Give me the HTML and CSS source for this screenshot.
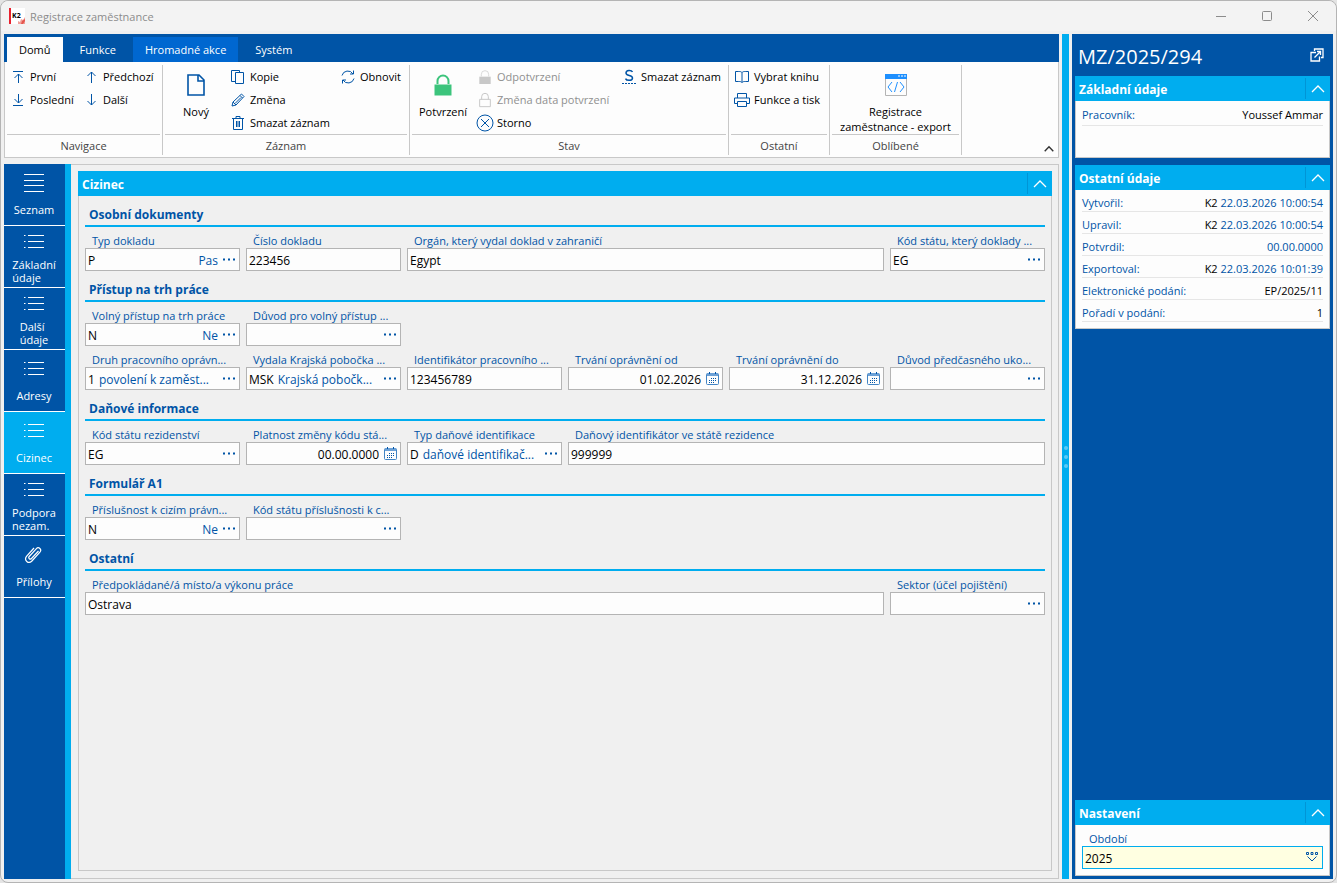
FILE: index.html
```html
<!DOCTYPE html>
<html lang="cs">
<head>
  <meta charset="UTF-8">
  <meta name="viewport" content="width=device-width, initial-scale=1.0">
  <title>Registrace zaměstnance</title>
  <link rel="stylesheet" href="styles.css">
</head>
<body>

  <!-- icon set -->
  <svg class="sprite" aria-hidden="true">
    <symbol id="i-first" viewBox="0 0 16 16"><path d="M3 2.500h10M8.500 14V5M4.500 9l4-4 4 4"/></symbol>
    <symbol id="i-last" viewBox="0 0 16 16"><path d="M3 13.500h10M8.500 2v9M4.500 7l4 4 4-4"/></symbol>
    <symbol id="i-up" viewBox="0 0 16 16"><path d="M8.500 14V3M4.500 7l4-4 4 4"/></symbol>
    <symbol id="i-down" viewBox="0 0 16 16"><path d="M8.500 2v11M4.500 9l4 4 4-4"/></symbol>
    <symbol id="i-new" viewBox="0 0 24 24"><path stroke-width="1.6" d="M4 2h11l5 5v15H4zM14 2v6h6"/></symbol>
    <symbol id="i-copy" viewBox="0 0 16 16"><path d="M5 12.500H1.500v-11h8v2M5.500 3.500h8v11h-8z"/></symbol>
    <symbol id="i-edit" viewBox="0 0 16 16"><path d="M2 14l1-4 8.500-8 2.500 2.500-8 8.500zM10 3.500l2.500 2.500M3 10l3 3M5 11.500l6-6"/></symbol>
    <symbol id="i-trash" viewBox="0 0 16 16"><path d="M2 3.500h12M6 3V1.500h4V3M3.500 3.500v11h9v-11M6.500 6v6M8 6v6M9.500 6v6"/></symbol>
    <symbol id="i-refresh" viewBox="0 0 16 16"><path d="M2 6.500A6 6 0 0 1 13 5M13.500 1.500V5H10M14 9.500A6 6 0 0 1 3 11M2.500 14.500V11H6"/></symbol>
    <symbol id="i-lock" viewBox="0 0 24 24"><path d="M6.500 11V8a5.500 5.500 0 0 1 11 0v3"/><path stroke="none" fill="currentColor" d="M3.500 11.500h17v11h-17z"/></symbol>
    <symbol id="i-lock-open" viewBox="0 0 24 24"><path stroke-width="1.500" d="M7 11V7a5 5 0 0 1 10 0v4M4 11h16v11H4z"/></symbol>
    <symbol id="i-cancel" viewBox="0 0 18 18"><circle cx="9" cy="9" r="8"/><path d="M5 5l8 8M13 5l-8 8"/></symbol>
    <symbol id="i-draft" viewBox="0 0 16 16"><path stroke-width="1.500" d="M11.500 3C10.500 1 5 .8 5 4c0 3.300 6.500 1.700 6.500 5 0 3.200-6 2.900-7 .6"/><path stroke-dasharray="2 1" d="M1 14.500h14"/></symbol>
    <symbol id="i-book" viewBox="0 0 16 16"><path d="M8 3.500C7 2.300 6 2.500 1.500 2.500v10C6 12.500 7 12.300 8 13.500c1-1.200 2-1 6.500-1v-10c-4.500 0-5.500-.2-6.500 1zv10"/></symbol>
    <symbol id="i-print" viewBox="0 0 18 16"><path d="M4.500 6V1.500h9V6M4.500 11.500h-3V6h15v5.500h-3M4.500 9.500h9v5h-9z"/></symbol>
    <symbol id="i-code" viewBox="0 0 22 22"><path stroke="#b4b4b4" fill="#fdfdfd" d="M.5 1v20.500h21V1"/><path fill="#1e90ff" stroke="none" d="M0 0h22v5H0z"/><path stroke="#fff" stroke-dasharray="2 1" d="M13 2h8"/><path stroke="#1e90ff" d="M7 8l-4 5 4 5M15 8l4 5-4 5M12.500 8l-3 10"/></symbol>
    <symbol id="i-lines" viewBox="0 0 20 18"><path d="M0 .5h20M0 6.500h20M0 11.500h20M0 17.500h20"/></symbol>
    <symbol id="i-list" viewBox="0 0 20 14"><path d="M4 .5h16M4 6.500h16M4 12.500h16M0 .5h1.500M0 6.500h1.500M0 12.500h1.500"/></symbol>
    <symbol id="i-clip" viewBox="0 0 20 20"><path stroke-width="1.200" d="M14.500 6l-7 7.500c-1.500 1.600-3.600-.4-2.300-2l7-7.700c2.500-2.600 6 .6 3.700 3.300l-8 8.900c-3.500 3.600-8.400-.8-5.200-4.800L10 3"/></symbol>
    <symbol id="i-chev" viewBox="0 0 14 8"><path d="M1 7l6-6 6 6"/></symbol>
    <symbol id="i-dots" viewBox="0 0 13 3"><path stroke="none" fill="currentColor" d="M0 .5h2v2H0zM5 .5h2v2H5zM10 .5h2v2h-2z"/></symbol>
    <symbol id="i-cal" viewBox="0 0 13 13"><rect x=".5" y="1.500" width="12" height="11" rx="1" stroke="#4284c4"/><path stroke="none" fill="#6ba0d6" d="M1 1h11v3H1z"/><path d="M3.500 0v2M9.500 0v2"/><path stroke-dasharray="1 1" d="M5 6.500h5M3 8.500h7M3 10.500h5"/></symbol>
    <symbol id="i-drop" viewBox="0 0 12 10"><path d="M.5.5h2v2h-2zM5 .5h2v2H5zM9.500.5h2v2h-2zM1.500 4.500L6 9l4.500-4.500"/></symbol>
    <symbol id="i-popout" viewBox="0 0 14 14"><path stroke-width="1.300" d="M4.500 3V1h8.500v8.500h-2M6 4.500H1V13h8.500V8.500M4.500 9.500l6-6M7 3.500h3.500V7"/></symbol>
  </svg>

  <div class="window">
    <header class="titlebar">
      <svg class="app-logo" viewBox="0 0 16 16"><path fill="#fff" d="M0 0h16v16H0z"/><path fill="#e8212e" d="M0 0h2v16H0z"/><path fill="#f3a09a" d="M9 16v-3l2 1 1-3 2 1 2-3v7z"/><path fill="#e4574f" d="M12 16l1-3 3-2v2l-2 3z"/><text x="3" y="10" class="logo-text">K2</text></svg>
      <span class="caption">Registrace zaměstnance</span>
      <div class="window-buttons">
        <button aria-label="Minimalizovat"><svg viewBox="0 0 12 12"><path d="M1 6.500h10"/></svg></button>
        <button aria-label="Maximalizovat"><svg viewBox="0 0 12 12"><rect x="1.500" y="1.500" width="9" height="9" rx="1"/></svg></button>
        <button aria-label="Zavřít"><svg viewBox="0 0 12 12"><path d="M1 1l10 10M11 1L1 11"/></svg></button>
      </div>
    </header>

    <div class="workspace">
      <div class="main">
        <nav class="tabs">
          <button class="tab active">Domů</button>
          <button class="tab">Funkce</button>
          <button class="tab hover">Hromadné akce</button>
          <button class="tab">Systém</button>
        </nav>

        <div class="ribbon">
          <section class="group nav-group">
            <div class="group-body">
              <div class="col">
                <button class="cmd"><svg><use href="#i-first"/></svg>První</button>
                <button class="cmd"><svg><use href="#i-last"/></svg>Poslední</button>
              </div>
              <div class="col">
                <button class="cmd"><svg><use href="#i-up"/></svg>Předchozí</button>
                <button class="cmd"><svg><use href="#i-down"/></svg>Další</button>
              </div>
            </div>
            <h2>Navigace</h2>
          </section>

          <section class="group record-group">
            <div class="group-body">
              <button class="big"><svg><use href="#i-new"/></svg>Nový</button>
              <div class="col">
                <button class="cmd"><svg><use href="#i-copy"/></svg>Kopie</button>
                <button class="cmd"><svg><use href="#i-edit"/></svg>Změna</button>
                <button class="cmd"><svg><use href="#i-trash"/></svg>Smazat záznam</button>
              </div>
              <div class="col">
                <button class="cmd"><svg><use href="#i-refresh"/></svg>Obnovit</button>
              </div>
            </div>
            <h2>Záznam</h2>
          </section>

          <section class="group state-group">
            <div class="group-body">
              <button class="big confirm"><svg><use href="#i-lock"/></svg>Potvrzení</button>
              <div class="col">
                <button class="cmd" disabled><svg><use href="#i-lock"/></svg>Odpotvrzení</button>
                <button class="cmd" disabled><svg><use href="#i-lock-open"/></svg>Změna data potvrzení</button>
                <button class="cmd"><svg class="wide"><use href="#i-cancel"/></svg>Storno</button>
              </div>
              <div class="col">
                <button class="cmd"><svg><use href="#i-draft"/></svg>Smazat záznam</button>
              </div>
            </div>
            <h2>Stav</h2>
          </section>

          <section class="group other-group">
            <div class="group-body">
              <div class="col">
                <button class="cmd"><svg><use href="#i-book"/></svg>Vybrat knihu</button>
                <button class="cmd"><svg class="wide"><use href="#i-print"/></svg>Funkce a tisk</button>
              </div>
            </div>
            <h2>Ostatní</h2>
          </section>

          <section class="group fav-group">
            <div class="group-body">
              <button class="big"><svg><use href="#i-code"/></svg>Registrace<br>zaměstnance - export</button>
            </div>
            <h2>Oblíbené</h2>
          </section>

          <button class="ribbon-collapse" aria-label="Sbalit pás karet"><svg><use href="#i-chev"/></svg></button>
        </div>

        <div class="content">
          <nav class="side">
            <button><svg class="lines"><use href="#i-lines"/></svg><span>Seznam</span></button>
            <button class="two-line"><svg><use href="#i-list"/></svg><span>Základní<br>údaje</span></button>
            <button class="two-line"><svg><use href="#i-list"/></svg><span>Další<br>údaje</span></button>
            <button><svg><use href="#i-list"/></svg><span>Adresy</span></button>
            <button class="active"><svg><use href="#i-list"/></svg><span>Cizinec</span></button>
            <button class="two-line"><svg><use href="#i-list"/></svg><span>Podpora<br>nezam.</span></button>
            <button><svg class="clip"><use href="#i-clip"/></svg><span>Přílohy</span></button>
          </nav>

          <div class="pane">
            <form class="panel">
              <div class="panel-head">
                <h2>Cizinec</h2>
                <button type="button" aria-label="Sbalit"><svg><use href="#i-chev"/></svg></button>
              </div>

              <div class="panel-body">
                <h3>Osobní dokumenty</h3>
                <div class="fields">
                  <div class="field">
                    <label for="docType">Typ dokladu</label>
                    <div class="box"><input id="docType" value="P"><span class="note">Pas</span><button type="button" aria-label="Vybrat"><svg><use href="#i-dots"/></svg></button></div>
                  </div>
                  <div class="field">
                    <label for="docNo">Číslo dokladu</label>
                    <div class="box"><input id="docNo" value="223456"></div>
                  </div>
                  <div class="field span-3">
                    <label for="docOrg">Orgán, který vydal doklad v zahraničí</label>
                    <div class="box"><input id="docOrg" value="Egypt"></div>
                  </div>
                  <div class="field">
                    <label for="docState">Kód státu, který doklady ...</label>
                    <div class="box"><input id="docState" value="EG"><button type="button" aria-label="Vybrat"><svg><use href="#i-dots"/></svg></button></div>
                  </div>
                </div>

                <h3>Přístup na trh práce</h3>
                <div class="fields">
                  <div class="field">
                    <label for="freeAccess">Volný přístup na trh práce</label>
                    <div class="box"><input id="freeAccess" value="N"><span class="note">Ne</span><button type="button" aria-label="Vybrat"><svg><use href="#i-dots"/></svg></button></div>
                  </div>
                  <div class="field">
                    <label for="freeReason">Důvod pro volný přístup ...</label>
                    <div class="box"><input id="freeReason"><button type="button" aria-label="Vybrat"><svg><use href="#i-dots"/></svg></button></div>
                  </div>
                  <div class="field row-start">
                    <label for="permitKind">Druh pracovního oprávn...</label>
                    <div class="box coded"><input id="permitKind" value="1"><span class="note">povolení k zaměst...</span><button type="button" aria-label="Vybrat"><svg><use href="#i-dots"/></svg></button></div>
                  </div>
                  <div class="field">
                    <label for="permitOffice">Vydala Krajská pobočka ...</label>
                    <div class="box coded"><input id="permitOffice" value="MSK"><span class="note">Krajská pobočk...</span><button type="button" aria-label="Vybrat"><svg><use href="#i-dots"/></svg></button></div>
                  </div>
                  <div class="field">
                    <label for="permitId">Identifikátor pracovního ...</label>
                    <div class="box"><input id="permitId" value="123456789"></div>
                  </div>
                  <div class="field">
                    <label for="permitFrom">Trvání oprávnění od</label>
                    <div class="box date"><input id="permitFrom" value="01.02.2026"><button type="button" aria-label="Kalendář"><svg><use href="#i-cal"/></svg></button></div>
                  </div>
                  <div class="field">
                    <label for="permitTo">Trvání oprávnění do</label>
                    <div class="box date"><input id="permitTo" value="31.12.2026"><button type="button" aria-label="Kalendář"><svg><use href="#i-cal"/></svg></button></div>
                  </div>
                  <div class="field">
                    <label for="endReason">Důvod předčasného uko...</label>
                    <div class="box"><input id="endReason"><button type="button" aria-label="Vybrat"><svg><use href="#i-dots"/></svg></button></div>
                  </div>
                </div>

                <h3>Daňové informace</h3>
                <div class="fields">
                  <div class="field">
                    <label for="taxState">Kód státu rezidenství</label>
                    <div class="box"><input id="taxState" value="EG"><button type="button" aria-label="Vybrat"><svg><use href="#i-dots"/></svg></button></div>
                  </div>
                  <div class="field">
                    <label for="taxFrom">Platnost změny kódu stá...</label>
                    <div class="box date"><input id="taxFrom" value="00.00.0000"><button type="button" aria-label="Kalendář"><svg><use href="#i-cal"/></svg></button></div>
                  </div>
                  <div class="field">
                    <label for="taxKind">Typ daňové identifikace</label>
                    <div class="box coded"><input id="taxKind" value="D"><span class="note">daňové identifikač...</span><button type="button" aria-label="Vybrat"><svg><use href="#i-dots"/></svg></button></div>
                  </div>
                  <div class="field span-3">
                    <label for="taxId">Daňový identifikátor ve státě rezidence</label>
                    <div class="box"><input id="taxId" value="999999"></div>
                  </div>
                </div>

                <h3>Formulář A1</h3>
                <div class="fields">
                  <div class="field">
                    <label for="a1Law">Příslušnost k cizím právn...</label>
                    <div class="box"><input id="a1Law" value="N"><span class="note">Ne</span><button type="button" aria-label="Vybrat"><svg><use href="#i-dots"/></svg></button></div>
                  </div>
                  <div class="field">
                    <label for="a1State">Kód státu příslušnosti k c...</label>
                    <div class="box"><input id="a1State"><button type="button" aria-label="Vybrat"><svg><use href="#i-dots"/></svg></button></div>
                  </div>
                </div>

                <h3>Ostatní</h3>
                <div class="fields">
                  <div class="field span-5">
                    <label for="place">Předpokládané/á místo/a výkonu práce</label>
                    <div class="box"><input id="place" value="Ostrava"></div>
                  </div>
                  <div class="field">
                    <label for="sector">Sektor (účel pojištění)</label>
                    <div class="box"><input id="sector"><button type="button" aria-label="Vybrat"><svg><use href="#i-dots"/></svg></button></div>
                  </div>
                </div>
              </div>
            </form>
          </div>
        </div>
      </div>

      <div class="splitter"><i></i><i></i><i></i></div>

      <aside class="preview">
        <div class="preview-title">
          <h1>MZ/2025/294</h1>
          <button aria-label="Otevřít v okně"><svg><use href="#i-popout"/></svg></button>
        </div>

        <section class="card person">
          <div class="panel-head">
            <h2>Základní údaje</h2>
            <button aria-label="Sbalit"><svg><use href="#i-chev"/></svg></button>
          </div>
          <dl>
            <div><dt>Pracovník:</dt><dd>Youssef Ammar</dd></div>
          </dl>
        </section>

        <section class="card">
          <div class="panel-head">
            <h2>Ostatní údaje</h2>
            <button aria-label="Sbalit"><svg><use href="#i-chev"/></svg></button>
          </div>
          <dl>
            <div><dt>Vytvořil:</dt><dd>K2 <em>22.03.2026 10:00:54</em></dd></div>
            <div><dt>Upravil:</dt><dd>K2 <em>22.03.2026 10:00:54</em></dd></div>
            <div><dt>Potvrdil:</dt><dd><em>00.00.0000</em></dd></div>
            <div><dt>Exportoval:</dt><dd>K2 <em>22.03.2026 10:01:39</em></dd></div>
            <div><dt>Elektronické podání:</dt><dd>EP/2025/11</dd></div>
            <div><dt>Pořadí v podání:</dt><dd>1</dd></div>
          </dl>
        </section>

        <section class="card settings">
          <div class="panel-head">
            <h2>Nastavení</h2>
            <button aria-label="Sbalit"><svg><use href="#i-chev"/></svg></button>
          </div>
          <div class="settings-body">
            <label for="period">Období</label>
            <div class="select-box">
              <select id="period"><option>2025</option></select>
              <svg><use href="#i-drop"/></svg>
            </div>
          </div>
        </section>
      </aside>
    </div>
  </div>

</body>
</html>
```

FILE: styles.css
```css
* {
  box-sizing: border-box;
}

body {
  margin: 0;
  height: 100vh;
  background-color: #e4e4e4;
  color: #000;
  font-family: "Open Sans", "Noto Sans", sans-serif;
  font-size: 11px;
  line-height: 15px;
}

h1, h2, h3, dl, dd {
  margin: 0;
}

button, input, select {
  margin: 0;
  padding: 0;
  border: 0;
  background: none;
  color: inherit;
  font: inherit;
}

svg {
  display: block;
  flex: none;
  fill: none;
  stroke: currentColor;
}

.sprite {
  position: absolute;
  width: 0;
  height: 0;
}

.window {
  display: flex;
  flex-direction: column;
  height: 100%;
  padding: 0 3px 3px;
  border: 1px solid #b4b4b4;
  border-radius: 8px;
  background-color: #f0f0f0;
}

/* title bar */
.titlebar {
  display: flex;
  align-items: center;
  height: 33px;
  margin: 0 -3px;
  padding: 0 8px 3px;
  border-radius: 8px 8px 0 0;
  background: linear-gradient(#f3f3f3 30px, #f0f0f0 30px);
  color: #8c8c8c;
}

.app-logo {
  width: 16px;
  height: 16px;
  stroke: none;
}

.logo-text {
  fill: #000;
  font-size: 7px;
  font-weight: bold;
}

.caption {
  margin-left: 5px;
}

.window-buttons {
  display: flex;
  margin-left: auto;
}

.window-buttons button {
  display: grid;
  place-items: center;
  width: 46px;
  height: 28px;
}

.window-buttons button:last-child {
  width: 30px;
  margin-left: 8px;
}

.window-buttons svg {
  width: 12px;
  height: 12px;
}

.workspace {
  display: flex;
  flex: 1;
  gap: 3px;
  min-height: 0;
}

.main {
  display: flex;
  flex: 1;
  flex-direction: column;
  min-width: 0;
}

/* ribbon */
.tabs {
  display: flex;
  gap: 5px;
  height: 28px;
  padding: 3px 3px 0;
  background-color: #0054a6;
}

.tab {
  padding: 0 12px;
  color: #fff;
}

.tab.active {
  background-color: #fdfdfd;
  color: #000;
}

.tab.hover {
  background-color: #0067d0;
}

.ribbon {
  display: flex;
  height: 96px;
  margin-bottom: 6px;
  padding: 3px 0 2px;
  border: 1px solid #c8c8c8;
  border-top: 0;
  background-color: #fdfdfd;
}

.group {
  flex: none;
  padding: 0 2px;
  border-right: 1px solid #c8c8c8;
}

.nav-group {
  width: 158px;
}

.record-group {
  width: 247px;
}

.state-group {
  width: 319px;
}

.other-group {
  width: 101px;
}

.fav-group {
  width: 132px;
}

.group-body {
  display: flex;
  height: 70px;
  border-bottom: 1px solid #c8c8c8;
}

.nav-group .col {
  min-width: 73px;
}

.record-group .col {
  min-width: 110px;
}

.state-group .col {
  min-width: 144px;
}

.group h2 {
  height: 20px;
  color: #444;
  font-size: 11px;
  font-weight: normal;
  line-height: 21px;
  text-align: center;
}

.cmd {
  display: flex;
  align-items: center;
  gap: 4px;
  height: 23px;
  padding: 0 3px;
  white-space: nowrap;
}

.cmd svg {
  width: 16px;
  height: 16px;
  color: #0054a6;
}

.cmd svg.wide {
  width: 18px;
  height: 18px;
  margin: 0 -1px;
}

.cmd:disabled {
  color: #909090;
}

.cmd:disabled svg {
  color: #c8c8c8;
}

.big {
  display: flex;
  flex-direction: column;
  align-items: center;
  gap: 7px;
  min-width: 62px;
  padding: 8px 4px 0;
}

.big svg {
  width: 24px;
  height: 24px;
  color: #0054a6;
}

.confirm svg {
  color: #3cc47c;
  stroke-width: 2;
}

.fav-group .big {
  flex: 1;
  padding: 8px 0 0;
  white-space: nowrap;
}

.fav-group .big svg {
  width: 22px;
}

.ribbon-collapse {
  align-self: flex-end;
  margin: 0 4px 0 auto;
}

.ribbon-collapse svg {
  width: 10px;
  height: 12px;
  color: #333;
  stroke-width: 2;
}

/* side tabs */
.content {
  display: flex;
  flex: 1;
  min-height: 0;
}

.side {
  flex: none;
  width: 67px;
  border-right: 6px solid #00adef;
  background-color: #0054a6;
}

.side button {
  display: flex;
  flex-direction: column;
  align-items: center;
  width: 100%;
  height: 62px;
  padding: 5px 1px 3px 0;
  border-bottom: 1px solid #fff;
  color: #fff;
  line-height: 13px;
  text-align: left;
}

.side button.two-line {
  padding-top: 0;
}

.side button span {
  display: grid;
  align-items: center;
  min-height: 26px;
}

.side button.active {
  background-color: #00adef;
}

.side svg {
  width: 20px;
  height: 14px;
  margin: auto;
}

.side svg.lines {
  height: 18px;
}

.side svg.clip {
  height: 20px;
}

/* form */
.pane {
  flex: 1;
  min-width: 0;
  padding: 6px 6px 7px 7px;
  border: 1px solid #c8c8c8;
  border-left: 0;
}

.panel {
  height: 100%;
  border: 1px solid #c8c8c8;
  border-top: 0;
}

.panel-head {
  display: flex;
  align-items: center;
  height: 25px;
  margin: 0 -1px;
  padding-left: 4px;
  background-color: #00adef;
  color: #fff;
}

.panel-head h2 {
  flex: 1;
  padding-top: 1px;
  font-size: 12px;
  font-weight: bold;
}

.panel-head button {
  display: grid;
  place-items: center;
  width: 25px;
  height: 21px;
  border-left: 1px solid #0095d6;
}

.panel-head svg {
  width: 14px;
  height: 8px;
  stroke-width: 1.3;
}

.panel-body {
  padding: 0 6px;
}

.panel-body h3 {
  margin-top: 6px;
  padding: 2px 4px 0;
  border-bottom: 2px solid #00adef;
  color: #0054a6;
  font-size: 12px;
  line-height: 21px;
}

.fields {
  display: grid;
  grid-template-columns: repeat(6, minmax(0, 1fr));
  column-gap: 6px;
}

.span-3 {
  grid-column: span 3;
}

.span-5 {
  grid-column: span 5;
}

.row-start {
  grid-column-start: 1;
}

.field label,
.settings-body label {
  display: block;
  height: 21px;
  padding: 6px 0 0 7px;
  color: #0054a6;
  white-space: nowrap;
}

.box {
  display: flex;
  align-items: center;
  height: 23px;
  padding: 0 2px;
  border: 1px solid #b4b4b4;
  background-color: #fdfdfd;
  font-size: 12px;
}

.box input {
  flex: 1;
  min-width: 0;
  height: 21px;
  padding-top: 2px;
}

.coded input {
  flex: none;
  field-sizing: content;
}

.note {
  padding-top: 2px;
  color: #0054a6;
  white-space: nowrap;
}

.coded .note {
  flex: 1;
  margin-left: 4px;
}

.box button {
  display: grid;
  place-items: center;
  width: 16px;
  height: 21px;
  margin-left: 3px;
  color: #0054a6;
}

.box button svg {
  width: 13px;
  height: 3px;
}

.date input {
  text-align: right;
}

.box.date button svg {
  height: 13px;
}

/* splitter */
.splitter {
  display: flex;
  flex-direction: column;
  align-items: center;
  justify-content: center;
  gap: 5px;
  width: 7px;
  background-color: #00adef;
}

.splitter i {
  width: 4px;
  height: 4px;
  border-radius: 50%;
  background-color: #5cc9f5;
}

/* preview */
.preview {
  display: flex;
  flex-direction: column;
  gap: 7px;
  width: 261px;
  padding: 0 3px;
  background-color: #0054a6;
}

.preview-title {
  display: flex;
  align-items: center;
  justify-content: space-between;
  height: 42px;
  margin-bottom: -7px;
  padding: 0 6px 0 3px;
  color: #fff;
}

.preview-title h1 {
  padding-top: 3px;
  font-size: 20px;
  font-weight: normal;
  line-height: 26px;
}

.preview-title svg {
  width: 14px;
  height: 14px;
}

.card {
  border: 1px solid #c8c8c8;
  border-top: 0;
  background-color: #fdfdfd;
}

.card dl {
  padding: 0 6px 6px;
}

.card dl div {
  display: flex;
  justify-content: space-between;
  align-items: center;
  height: 22px;
  padding-top: 3px;
  border-bottom: 1px solid #e6e6e6;
}

.card dt,
.card em {
  color: #0054a6;
  font-style: normal;
}

.card.person dl {
  padding-bottom: 31px;
}

.card.person dl div {
  height: 25px;
}

.settings {
  margin: auto 0 3px;
}

.settings-body {
  padding: 0 6px 6px;
}

.select-box {
  display: flex;
  position: relative;
}

.select-box select {
  flex: 1;
  height: 23px;
  padding: 1px 2px 0;
  border: 1px solid #00adef;
  background-color: #ffffe1;
  font-size: 12px;
  appearance: none;
}

.select-box svg {
  position: absolute;
  top: 6px;
  right: 5px;
  width: 12px;
  height: 10px;
  color: #0054a6;
  pointer-events: none;
}
```
